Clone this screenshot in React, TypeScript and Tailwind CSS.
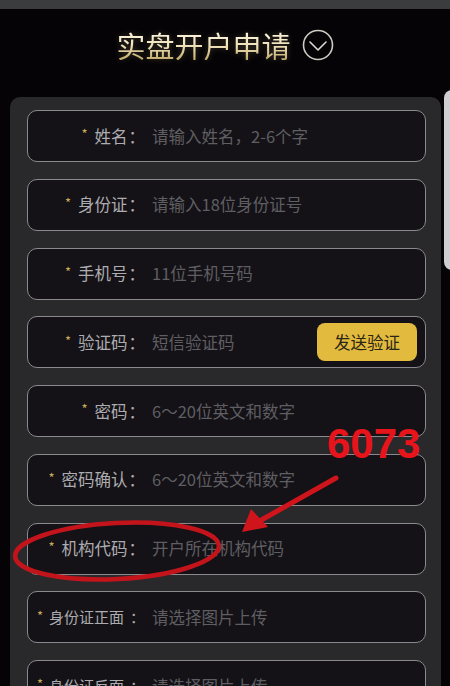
import React from 'react';

interface Field {
  label: string;
  placeholder: string;
  small?: boolean;
  action?: string;
}

const FIELDS: Field[] = [
  { label: '姓名', placeholder: '请输入姓名，2-6个字' },
  { label: '身份证', placeholder: '请输入18位身份证号' },
  { label: '手机号', placeholder: '11位手机号码' },
  { label: '验证码', placeholder: '短信验证码', action: '发送验证' },
  { label: '密码', placeholder: '6～20位英文和数字' },
  { label: '密码确认', placeholder: '6～20位英文和数字' },
  { label: '机构代码', placeholder: '开户所在机构代码' },
  { label: '身份证正面', placeholder: '请选择图片上传', small: true },
  { label: '身份证反面', placeholder: '请选择图片上传', small: true },
];

const FONT = "font-['Noto_Sans_CJK_SC','Noto_Sans',sans-serif]";

function FormRow({ field }: { field: Field }) {
  return (
    <div className="flex h-[52px] shrink-0 items-center rounded-[10px] border-[1.5px] border-[#8a898e] bg-[#141216]">
      <div
        className={`flex w-[117px] shrink-0 items-center justify-end text-[#adacb1] ${
          field.small ? 'text-[15px]' : 'text-[16.5px]'
        }`}
      >
        <span className={`-mt-[4px] text-[13px] text-[#c9ad5c] ${field.small ? 'mr-[6px]' : 'mr-[7px]'}`}>*</span>
        <span>{field.label}</span>
        <span className={field.small ? 'ml-[6px]' : 'ml-[1px]'}>：</span>
      </div>
      <div className="pl-[7px] text-[16.5px] text-[#5f5e63]">{field.placeholder}</div>
      {field.action && (
        <button className="ml-auto mr-[8px] flex h-[38px] w-[100px] items-center justify-center rounded-[8px] bg-[#e2ba3d] text-[16.5px] text-[#2a2417]">
          {field.action}
        </button>
      )}
    </div>
  );
}

export default function App() {
  return (
    <div className={`relative h-[686px] w-[450px] overflow-hidden bg-[#050306] ${FONT}`}>
      {/* status strip */}
      <div className="h-[9px] bg-[#3b3c3e]" />

      {/* title */}
      <div className="flex h-[72px] items-center justify-center gap-[11px]">
        <h1 className="bg-gradient-to-b from-[#fffaea] via-[#efe3bd] to-[#bfa764] bg-clip-text text-[29px] leading-none text-transparent [text-shadow:0_0_6px_rgba(240,220,160,0.25)]">
          实盘开户申请
        </h1>
        <svg width="32" height="32" viewBox="0 0 32 32" fill="none">
          <circle cx="16" cy="16" r="14.5" stroke="#cfcbc3" strokeWidth="1.6" />
          <path d="M8 13 L16 21 L24 13" stroke="#dedbd4" strokeWidth="1.6" strokeLinecap="round" strokeLinejoin="round" />
        </svg>
      </div>

      {/* form panel */}
      <div className="ml-[10px] mt-[16px] flex w-[431px] flex-col gap-[16.75px] rounded-t-[10px] bg-[#29282b] pb-[20px] pl-[17px] pr-[15px] pt-[13px]">
        {FIELDS.map((f) => (
          <FormRow key={f.label} field={f} />
        ))}
      </div>

      {/* scrollbar edge */}
      <div className="absolute left-[444px] top-[90px] h-[180px] w-[8px] rounded-l-[8px] bg-[#cfced3]" />

      {/* red annotation */}
      <svg className="pointer-events-none absolute left-0 top-0" width="450" height="686" viewBox="0 0 450 686">
        <ellipse
          cx="117"
          cy="551"
          rx="102"
          ry="28"
          transform="rotate(-3 117 551)"
          fill="none"
          stroke="#c4141b"
          strokeWidth="4.5"
        />
        <line x1="336" y1="478" x2="256" y2="523" stroke="#d0141c" strokeWidth="5" strokeLinecap="round" />
        <polygon points="242,532 251,509 268,527" fill="#d0141c" />
        <text
          x="327"
          y="458"
          fill="#e8141c"
          fontSize="42"
          fontWeight="bold"
          fontFamily="'Liberation Sans', Arial, sans-serif"
        >
          6073
        </text>
      </svg>
    </div>
  );
}
